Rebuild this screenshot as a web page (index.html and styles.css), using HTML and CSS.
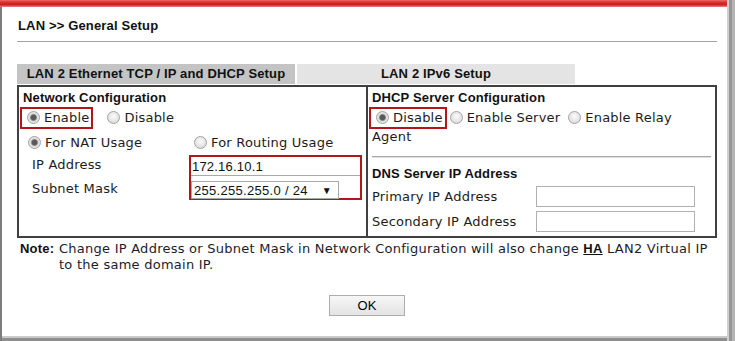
FILE: index.html
```html
<!DOCTYPE html>
<html lang="en">
  <head>
    <meta charset="UTF-8" />
    <title>LAN General Setup</title>
    <link rel="stylesheet" href="styles.css">
  </head>
  <body>
    <div class="window">
      <div class="topbar"></div>
      <div class="page">
        <h1 class="title">LAN &gt;&gt; General Setup</h1>

        <div class="tabs">
          <div class="tab active">LAN 2 Ethernet TCP / IP and DHCP Setup</div>
          <div class="tab">LAN 2 IPv6 Setup</div>
        </div>

        <div class="panel">
          <div class="col">
            <div class="col-title">Network Configuration</div>
            <div class="line">
              <span class="mark"><span class="radio on"></span>Enable</span><span class="opt opt-left"><span class="radio"></span>Disable</span>
            </div>
            <div class="line usage">
              <span class="opt wide"><span class="radio on"></span>For NAT Usage</span><span class="opt"><span class="radio"></span>For Routing Usage</span>
            </div>
            <div class="addr">
              <div class="addr-labels">
                <div class="addr-label">IP Address</div>
                <div class="addr-label">Subnet Mask</div>
              </div>
              <div class="addr-box">
                <div class="ip-field">172.16.10.1</div>
                <div class="select">
                  <span>255.255.255.0 / 24</span>
                  <span class="arrow">&#9660;</span>
                </div>
              </div>
            </div>
          </div>

          <div class="col col-right">
            <div class="col-title">DHCP Server Configuration</div>
            <div class="line dhcp">
              <span class="mark"><span class="radio on"></span>Disable</span><span class="opt"><span class="radio tight"></span>Enable Server</span><span class="opt gap"><span class="radio tight"></span>Enable Relay<br>Agent</span>
            </div>
            <div class="divider"></div>
            <div class="col-title dns-title">DNS Server IP Address</div>
            <div class="dns">
              <span class="dns-label">Primary IP Address</span>
              <span class="field"></span>
              <span class="dns-label">Secondary IP Address</span>
              <span class="field"></span>
            </div>
          </div>
        </div>

        <div class="note">
          <span class="note-head">Note:</span>
          <span class="note-text">Change IP Address or Subnet Mask in Network Configuration will also change <a class="ha">HA</a> LAN2 Virtual IP<br>to the same domain IP.</span>
        </div>

        <div class="actions">
          <button class="btn">OK</button>
        </div>
      </div>
    </div>
  </body>
</html>
```

FILE: styles.css
```css
* {
  box-sizing: border-box;
  margin: 0;
  padding: 0;
}
body {
  background: #ffffff;
  color: #1c1c1c;
  font-family: "DejaVu Sans", Verdana, sans-serif;
  font-size: 13px;
  letter-spacing: 0.2px;
}
.window {
  width: 735px;
  height: 341px;
  padding: 0 8px 5px 0;
  background: #ffffff;
  box-shadow: inset 2px 0 0 #7d7d7d, inset -3px 0 0 #b4b4b4,
    inset -6px 0 0 #979797, inset -8px 0 0 #cfcfcf, inset 0 -3px 0 #8e8e8e,
    inset 0 -5px 0 #c9c9c9;
}
.topbar {
  height: 7px;
  background: linear-gradient(
    to bottom,
    #f26a6a 0%,
    #e03030 30%,
    #cc1f1f 65%,
    #e88484 100%
  );
}
.page {
  padding-left: 17px;
  width: 717px;
}
.title {
  margin-top: 11px;
  padding-left: 1px;
  font: bold 13px/16px "Liberation Sans", Arial, sans-serif;
  letter-spacing: 0.15px;
  color: #111;
  padding-bottom: 7px;
  border-bottom: 1px solid #a3a3a3;
  width: 700px;
}
.tabs {
  display: flex;
  gap: 2px;
  margin-top: 22px;
  margin-bottom: 1px;
}
.tab {
  width: 278px;
  height: 20px;
  background: #e4e4e4;
  font: bold 13px/20px "Liberation Sans", Arial, sans-serif;
  letter-spacing: 0.15px;
  color: #111;
  text-align: center;
}
.tab.active {
  background: #c4c4c4;
}
.panel {
  display: grid;
  grid-template-columns: 347px 349px;
  width: 700px;
  border: 2px solid #404040;
}
.col {
  padding: 0 4px;
}
.col-right {
  border-left: 2px solid #404040;
  padding-bottom: 4px;
}
.col-title {
  font: bold 13px/21px "Liberation Sans", Arial, sans-serif;
  letter-spacing: 0.15px;
  color: #111;
}
.line {
  line-height: 19px;
  white-space: nowrap;
}
.usage {
  margin-top: 6px;
}
.radio {
  display: inline-block;
  width: 13px;
  height: 13px;
  margin: 0 4px 0 5px;
  vertical-align: -2px;
  border: 1px solid #a2a2a2;
  border-radius: 50%;
  background: radial-gradient(circle at 50% 40%, #fbfbfb, #d4d4d4);
}
.radio.on {
  background: radial-gradient(
    circle,
    #555 0,
    #5c5c5c 2.4px,
    #9a9a9a 3.2px,
    #dcdcdc 3.9px,
    #f2f2f2 100%
  );
}
.radio.tight {
  margin-left: 3px;
}
.mark {
  margin-left: -3px;
  padding: 1px 2px 2px 0;
  border: 2px solid #b3151b;
}
.opt-left {
  margin-left: 9px;
}
.opt.wide {
  display: inline-block;
  width: 166px;
}
.opt.gap {
  margin-left: 5px;
}
.addr {
  display: flex;
  margin-top: 3px;
}
.addr-labels {
  width: 166px;
  padding-left: 9px;
}
.addr-label {
  line-height: 20px;
}
.addr-label + .addr-label {
  margin-top: 4px;
}
.addr-box {
  width: 173px;
  height: 45px;
  border: 2px solid #b3151b;
}
.ip-field {
  height: 19px;
  padding-left: 1px;
  border-bottom: 1px solid #a9a9a9;
  font: 13px/19px "Liberation Sans", Arial, sans-serif;
  letter-spacing: 0.2px;
  color: #111;
}
.select {
  display: flex;
  justify-content: space-between;
  align-items: center;
  width: 148px;
  height: 18px;
  margin: 5px 0 0 0;
  padding: 0 6px 0 2px;
  border: 1px solid #a9a9a9;
  font: 13px "Liberation Sans", Arial, sans-serif;
  letter-spacing: 0.3px;
  color: #111;
}
.arrow {
  font-size: 10px;
}
.divider {
  margin: 10px 0 0;
  border-top: 1px solid #a8a8a8;
  border-bottom: 1px solid #e2e2e2;
}
.dns-title {
  margin-top: 6px;
  line-height: 20px;
}
.dns {
  display: grid;
  grid-template-columns: 164px 159px;
  grid-auto-rows: 21px;
  row-gap: 4px;
  align-items: center;
  margin-top: 2px;
}
.field {
  height: 21px;
  border: 1px solid #b0b0b0;
  background: #fff;
}
.note {
  display: flex;
  margin-top: 3px;
  line-height: 16px;
}
.note-head {
  width: 42px;
  padding-left: 3px;
  font: bold 13px/16px "Liberation Sans", Arial, sans-serif;
  color: #111;
}
.note-text {
  color: #1c1c2c;
  letter-spacing: 0.25px;
}
.ha {
  font: bold 13px "Liberation Sans", Arial, sans-serif;
  color: #111;
  text-decoration: underline;
}
.actions {
  display: flex;
  justify-content: center;
  width: 700px;
  margin-top: 22px;
}
.btn {
  width: 76px;
  height: 21px;
  background: linear-gradient(#f7f7f7, #e3e3e3);
  border: 1px solid #adadad;
  font: 13px "Liberation Sans", Arial, sans-serif;
  color: #000;
}
```
